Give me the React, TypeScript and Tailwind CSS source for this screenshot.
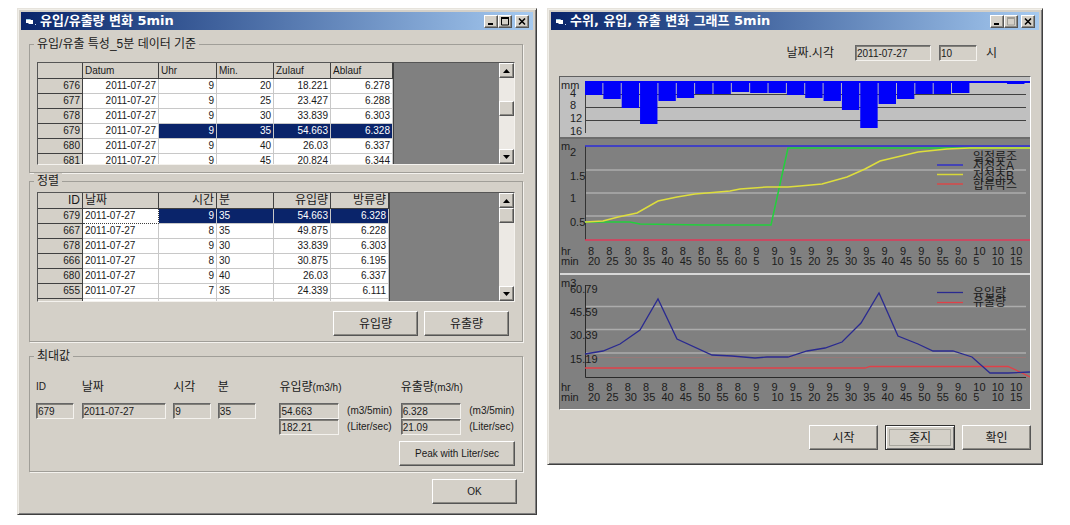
import type { ReactNode } from "react";
import clsx from "clsx";

const raised =
  "bg-[#d4d0c8] border border-t-white border-l-white border-r-[#555] border-b-[#555] shadow-[inset_-1px_-1px_0_#8c8a84]";
const sunken =
  "bg-[#d4d0c8] border border-t-[#666] border-l-[#666] border-r-[#f4f2ee] border-b-[#f4f2ee] shadow-[inset_1px_1px_0_#807e78]";

type WindowProps = {
  title: string;
  maximizable?: boolean;
  children: ReactNode;
};

function TitleButton({ label, disabled, children }: { label: string; disabled?: boolean; children: ReactNode }) {
  return (
    <button
      type="button"
      aria-label={label}
      disabled={disabled}
      className={clsx(raised, "flex h-[13px] w-[14px] items-center justify-center", disabled ? "text-[#a09e98]" : "text-black")}
    >
      <svg width="10" height="9" viewBox="0 0 10 9" fill="none" stroke="currentColor">
        {children}
      </svg>
    </button>
  );
}

function Window({ title, maximizable = true, children }: WindowProps) {
  return (
    <section className="border border-t-[#e6e3dc] border-r-[#404040] border-b-[#404040] border-l-[#e6e3dc] bg-[#d4d0c8] p-[3px] shadow-[inset_1px_1px_0_#f0eee8,inset_-1px_-1px_0_#808080]">
      <header className="flex h-[18px] items-center bg-linear-to-r from-[#0a246a] to-[#a6caf0] px-1">
        <svg width="12" height="12" viewBox="0 0 12 12" className="mr-[3px] shrink-0">
          <path d="M1 4h4l1 1h2v4H4L3 8H1z" fill="#fff" />
          <path d="M1 4h4v1H1z" fill="#9fd0e8" />
          <path d="M10 9h1v1h-1z" fill="#cde" />
        </svg>
        <h1 className="flex-1 whitespace-nowrap font-['DejaVu_Sans','Noto_Sans_CJK_KR',sans-serif] text-[13px] leading-[18px] font-bold text-white">
          {title}
        </h1>
        <TitleButton label="Minimize">
          <path d="M2 7h5" strokeWidth="2" />
        </TitleButton>
        <TitleButton label="Maximize" disabled={!maximizable}>
          <path d="M1.5 1v7h7V1M1 1.5h8" />
          <path d="M1 1h8" strokeWidth="2" />
        </TitleButton>
        <span className="w-[3px]" />
        <TitleButton label="Close">
          <path d="M2 1.5l6 6M8 1.5l-6 6" strokeWidth="1.6" />
        </TitleButton>
      </header>
      {children}
    </section>
  );
}

function Button({ children, className }: { children: ReactNode; className?: string }) {
  return (
    <button type="button" className={clsx(raised, "h-[25px] text-center", className)}>
      {children}
    </button>
  );
}

function Group({ legend, className, children }: { legend: string; className?: string; children: ReactNode }) {
  return (
    <fieldset className={clsx("min-w-0 border border-[#a09e98] px-[7px] shadow-[1px_1px_0_#f4f2ee]", className)}>
      <legend className="-ml-[3px] bg-[#d4d0c8] px-[3px] text-[12px] leading-[16px]">{legend}</legend>
      {children}
    </fieldset>
  );
}

function ScrollBar({ spacer }: { spacer: string }) {
  return (
    <div className="flex w-[15px] shrink-0 flex-col bg-[#ece9e4]">
      <button type="button" aria-label="Scroll up" className={clsx(raised, "flex h-[15px] shrink-0 items-center justify-center")}>
        <svg width="7" height="4" viewBox="0 0 7 4"><path d="M3.5 0L7 4H0z" /></svg>
      </button>
      <div className={spacer} />
      <div className={clsx(raised, "h-[15px] shrink-0")} />
      <div className="flex-1" />
      <button type="button" aria-label="Scroll down" className={clsx(raised, "flex h-[15px] shrink-0 items-center justify-center")}>
        <svg width="7" height="4" viewBox="0 0 7 4"><path d="M0 0h7L3.5 4z" /></svg>
      </button>
    </div>
  );
}

type GridProps = {
  headers: string[];
  headerAlign: string[];
  align: string[];
  lastWidth: string;
  rows: string[][];
  selected: string;
  focusCell?: boolean;
  height: string;
  spacer: string;
  headerSize: string;
};

function DataGrid({ headers, headerAlign, align, lastWidth, rows, selected, focusCell, height, spacer, headerSize }: GridProps) {
  return (
    <div className={clsx("flex overflow-hidden border border-t-[#555] border-l-[#555] border-r-[#f4f2ee] border-b-[#f4f2ee] bg-[#808080]", height)}>
      <div className="flex-1 overflow-hidden">
        <table className="table-fixed border-separate border-spacing-0 border-r border-[#404040] text-[10px] leading-[14px]">
          <colgroup>
            <col className="w-[45px]" />
            <col className="w-[76px]" />
            <col className="w-[58px]" />
            <col className="w-[57px]" />
            <col className="w-[57px]" />
            <col className={lastWidth} />
          </colgroup>
          <thead>
            <tr>
              {headers.map((h, i) => (
                <th
                  key={i}
                  className={clsx(
                    "h-[16px] overflow-hidden border-r border-b border-[#404040] bg-[#d4d0c8] px-[2px] font-normal leading-[15px] whitespace-nowrap",
                    headerSize,
                    headerAlign[i],
                  )}
                >
                  {h}
                </th>
              ))}
            </tr>
          </thead>
          <tbody>
            {rows.map((row) => {
              const isSelected = row[0] === selected;
              return (
                <tr key={row[0]}>
                  {row.map((cell, i) => (
                    <td
                      key={i}
                      className={clsx(
                        "h-[15px] border-r border-b px-[2px] whitespace-nowrap",
                        align[i],
                        i === 0 && "border-[#404040] bg-[#d4d0c8]",
                        i > 0 && (isSelected && i > 1 ? "bg-[#0a246a] text-white" : "bg-white"),
                        // Focus rectangle on the current cell of the selected row
                        focusCell && isSelected && i === 1 ? "border-dotted border-[#404040]" : i > 0 && "border-[#c8c8c8]",
                      )}
                    >
                      {cell}
                    </td>
                  ))}
                </tr>
              );
            })}
          </tbody>
        </table>
      </div>
      <ScrollBar spacer={spacer} />
    </div>
  );
}

const dataRows = [
  ["676", "2011-07-27", "9", "20", "18.221", "6.278"],
  ["677", "2011-07-27", "9", "25", "23.427", "6.288"],
  ["678", "2011-07-27", "9", "30", "33.839", "6.303"],
  ["679", "2011-07-27", "9", "35", "54.663", "6.328"],
  ["680", "2011-07-27", "9", "40", "26.03", "6.337"],
  ["681", "2011-07-27", "9", "45", "20.824", "6.344"],
];

const sortedRows = [
  ["679", "2011-07-27", "9", "35", "54.663", "6.328"],
  ["667", "2011-07-27", "8", "35", "49.875", "6.228"],
  ["678", "2011-07-27", "9", "30", "33.839", "6.303"],
  ["666", "2011-07-27", "8", "30", "30.875", "6.195"],
  ["680", "2011-07-27", "9", "40", "26.03", "6.337"],
  ["655", "2011-07-27", "7", "35", "24.339", "6.111"],
  ["", "", "", "", "", ""],
];

const L = "text-left";
const R = "text-right";

function Field({ id, value, label, className }: { id: string; value: string; label?: string; className: string }) {
  return (
    <input
      id={id}
      aria-label={label}
      defaultValue={value}
      className={clsx(sunken, "h-[16px] px-px text-[10px] leading-[14px]", className)}
    />
  );
}

function FlowWindow() {
  return (
    <Window title="유입/유출량 변화 5min">
      <div className="pt-[6px] pr-[10px] pb-[7px] pl-[8px]">
        <Group legend="유입/유출 특성_5분 데이터 기준" className="pt-[10px] pb-[7px]">
          <DataGrid
            headers={["", "Datum", "Uhr", "Min.", "Zulauf", "Ablauf"]}
            headerAlign={[R, L, L, L, L, L]}
            align={[R, R, R, R, R, R]}
            lastWidth="w-[62px]"
            rows={dataRows}
            selected="679"
            height="h-[103px]"
            spacer="h-[23px]"
            headerSize="text-[10px]"
          />
        </Group>
        <Group legend="정렬" className="pt-[3px] pb-[5px]">
          <DataGrid
            headers={["ID", "날짜", "시간", "분", "유입량", "방류량"]}
            headerAlign={[R, L, R, L, R, R]}
            align={[R, L, R, L, R, R]}
            lastWidth="w-[58px]"
            rows={sortedRows}
            selected="679"
            focusCell
            height="h-[110px]"
            spacer="h-0"
            headerSize="text-[12px]"
          />
          <div className="mt-[9px] flex justify-end gap-[6px] pr-[6px]">
            <Button className="w-[85px]">유입량</Button>
            <Button className="w-[85px]">유출량</Button>
          </div>
        </Group>
        <Group legend="최대값" className="mt-[6px] pb-[5px]">
          <div className="-mx-px grid grid-cols-[46fr_92fr_45fr_62fr_68fr_54fr_69fr_47fr] pt-[14px] whitespace-nowrap">
            <label htmlFor="peak-id" className="h-[25px] text-[10px] leading-[18px]">ID</label>
            <label htmlFor="peak-date" className="leading-[18px]">날짜</label>
            <label htmlFor="peak-hour" className="leading-[18px]">시각</label>
            <label htmlFor="peak-min" className="leading-[18px]">분</label>
            <label htmlFor="inflow" className="col-span-2 leading-[18px]">
              유입량<span className="text-[10px]">(m3/h)</span>
            </label>
            <label htmlFor="outflow" className="col-span-2 leading-[18px]">
              유출량<span className="text-[10px]">(m3/h)</span>
            </label>

            <Field id="peak-id" value="679" className="w-[38px]" />
            <Field id="peak-date" value="2011-07-27" className="w-[84px]" />
            <Field id="peak-hour" value="9" className="w-[38px]" />
            <Field id="peak-min" value="35" className="w-[38px]" />
            <Field id="inflow" value="54.663" className="w-[60px]" />
            <span className="text-[10px] leading-[15px]">(m3/5min)</span>
            <Field id="outflow" value="6.328" className="w-[60px]" />
            <span className="text-[10px] leading-[15px]">(m3/5min)</span>

            <Field id="inflow-sec" label="유입량 Liter/sec" value="182.21" className="col-start-5 w-[60px]" />
            <span className="text-[10px] leading-[15px]">(Liter/sec)</span>
            <Field id="outflow-sec" label="유출량 Liter/sec" value="21.09" className="w-[60px]" />
            <span className="text-[10px] leading-[15px]">(Liter/sec)</span>
          </div>
          <div className="mt-[6px] flex justify-end">
            <Button className="w-[116px] text-[10px]">Peak with Liter/sec</Button>
          </div>
        </Group>
        <div className="mt-[7px] flex justify-end pr-[6px]">
          <Button className="w-[85px] text-[10px]">OK</Button>
        </div>
      </div>
    </Window>
  );
}

// Charts share one time axis: a slot every 5 minutes from 8:20 to 10:15
const SLOT = 18.35;
const AXIS_X = 25;
const rain = [14, 18, 27, 43, 20, 17, 13, 13, 11, 12, 12, 14, 17, 20, 29, 47, 23, 18, 13, 13, 12, 2, 2, 3];
const ticks = rain.map((_, i) => {
  if (i < 9) return { hr: 8, min: 20 + i * 5 };
  if (i < 21) return { hr: 9, min: (i - 8) * 5 };
  return { hr: 10, min: (i - 20) * 5 };
});

function TimeAxis({ y }: { y: number }) {
  return (
    <g>
      <text x="1" y={y}>hr</text>
      <text x="1" y={y + 10}>min</text>
      {ticks.map((t, i) => (
        <g key={i}>
          <text x={28 + i * SLOT} y={y}>{t.hr}</text>
          <text x={28 + i * SLOT} y={y + 10}>{t.min}</text>
        </g>
      ))}
    </g>
  );
}

function RainChart() {
  return (
    <svg viewBox="0 0 470 60" className="block w-full bg-[#c0c0c0] text-[11px]">
      <path d="M25 17.5H466M25 30.5H466M25 43.5H466M25.5 4V56" stroke="#404040" />
      <path d={`M25 4H470V6H25z`} fill="#0000fa" />
      {rain.map((h, i) => (
        <rect key={i} x={AXIS_X + i * SLOT} y="4" width="17.4" height={h} fill="#0000fa" />
      ))}
      <g fill="#222">
        <text x="1" y="12">mm</text>
        <text x="10" y="20">4</text>
        <text x="10" y="32">8</text>
        <text x="10" y="45">12</text>
        <text x="10" y="58">16</text>
      </g>
    </svg>
  );
}

function LevelChart() {
  return (
    <svg viewBox="0 0 470 136" className="block w-full bg-[#808080] text-[11px]">
      <path d="M0 1H470" stroke="#6c6c6c" strokeWidth="2" />
      <path d="M25 33H466M25 56H466M25 79H466" stroke="#acacac" strokeWidth="1.5" />
      <path d="M25.5 9V103" stroke="#333" />
      <g fill="none" strokeWidth="1.5">
        <path d="M25 85H70L80 87L143 88H211L228 11H470" stroke="#22d03c" />
        <path
          d="M25 85L43 84L58 80L77 76L98 64L117 60L135 57L147 56L170 54L180 52L207 50H228L240 49L262 47L287 40L305 32L320 24L358 15L387 12L410 11H470"
          stroke="#dede3c"
        />
        <path d="M25 9H470" stroke="#2c2cd8" />
        <path d="M25 103H470" stroke="#e03858" />
        <path d="M377 28H403" stroke="#3030c8" />
        <path d="M377 37.5H403" stroke="#d8d838" />
        <path d="M377 47H403" stroke="#d84848" />
      </g>
      <g fill="#1c1c1c">
        <text x="1" y="13">m</text>
        <text x="10" y="19">2</text>
        <text x="10" y="43">1.5</text>
        <text x="10" y="65">1</text>
        <text x="10" y="89">0.5</text>
        <g className="text-[12px]">
          <text x="413" y="24">일정류조</text>
          <text x="413" y="33">저정초A</text>
          <text x="413" y="43">저정초B</text>
          <text x="413" y="52">합류박스</text>
        </g>
        <TimeAxis y={118} />
      </g>
    </svg>
  );
}

function FlowChart() {
  return (
    <svg viewBox="0 0 470 134" className="block w-full bg-[#808080] text-[11px]">
      <path d="M25 31.5H466M25 54.5H466M25 78H466" stroke="#acacac" strokeWidth="1.5" />
      <path d="M25 82.5H466" stroke="#987878" />
      <path d="M25.5 10V102.5H466" stroke="#2a2a2a" fill="none" />
      <g fill="none" strokeWidth="1.3">
        <path d="M25 93H305L310 91.5H448L460 97L470 102" stroke="#e04048" />
        <path
          d="M25 79L43 76L60 69L80 55L98 24L117 64L152 80L172 81L195 83L207 82H228L247 76L265 73L282 67L301 48L319 18L338 61L358 69L373 76H393L412 82L430 98H448L470 97"
          stroke="#2a2a90"
        />
        <path d="M377 17.5H403" stroke="#2a2a90" />
        <path d="M377 27.5H403" stroke="#e04048" />
      </g>
      <g fill="#1c1c1c">
        <text x="1" y="12">m3</text>
        <text x="10" y="18">60.79</text>
        <text x="10" y="41">45.59</text>
        <text x="10" y="64">30.39</text>
        <text x="10" y="88">15.19</text>
        <g className="text-[12px]">
          <text x="413" y="22">유입량</text>
          <text x="413" y="31">유출량</text>
        </g>
        <TimeAxis y={116} />
      </g>
    </svg>
  );
}

function GraphWindow() {
  return (
    <Window title="수위, 유입, 유출 변화 그래프 5min" maximizable={false}>
      <div className="px-[8px] pt-[15px] pb-[11px]">
        <div className="flex items-center justify-end pr-[34px] whitespace-nowrap">
          <label htmlFor="graph-date" className="mr-[21px] leading-[16px]">날짜.시각</label>
          <Field id="graph-date" value="2011-07-27" className="mr-[8px] w-[76px]" />
          <Field id="graph-hour" value="10" className="mr-[9px] w-[38px]" />
          <label htmlFor="graph-hour" className="leading-[16px]">시</label>
        </div>
        <div className="mt-[15px] border border-t-[#606060] border-r-white border-b-white border-l-[#606060]">
          <RainChart />
          <LevelChart />
          <div className="h-[2px] bg-[#d8d8d8]" />
          <FlowChart />
        </div>
        <div className="mt-[15px] flex justify-end gap-[7px]">
          <Button className="w-[69px]">시작</Button>
          <button type="button" className="h-[25px] w-[70px] border border-[#303030] bg-[#d4d0c8] p-[3px] text-center shadow-[inset_1px_1px_0_#fff,inset_-1px_-1px_0_#777]">
            <span className="flex h-full items-center justify-center border border-[#a8a69e]">중지</span>
          </button>
          <Button className="w-[69px]">확인</Button>
        </div>
      </div>
    </Window>
  );
}

export default function App() {
  return (
    <main className="grid min-h-screen grid-cols-[520fr_496fr] items-start gap-[10px] bg-white pt-[8px] pr-[27px] pl-[17px] font-['Liberation_Sans','Noto_Sans_CJK_KR',sans-serif] text-[12px] text-[#1a1a1a]">
      <FlowWindow />
      <GraphWindow />
    </main>
  );
}
